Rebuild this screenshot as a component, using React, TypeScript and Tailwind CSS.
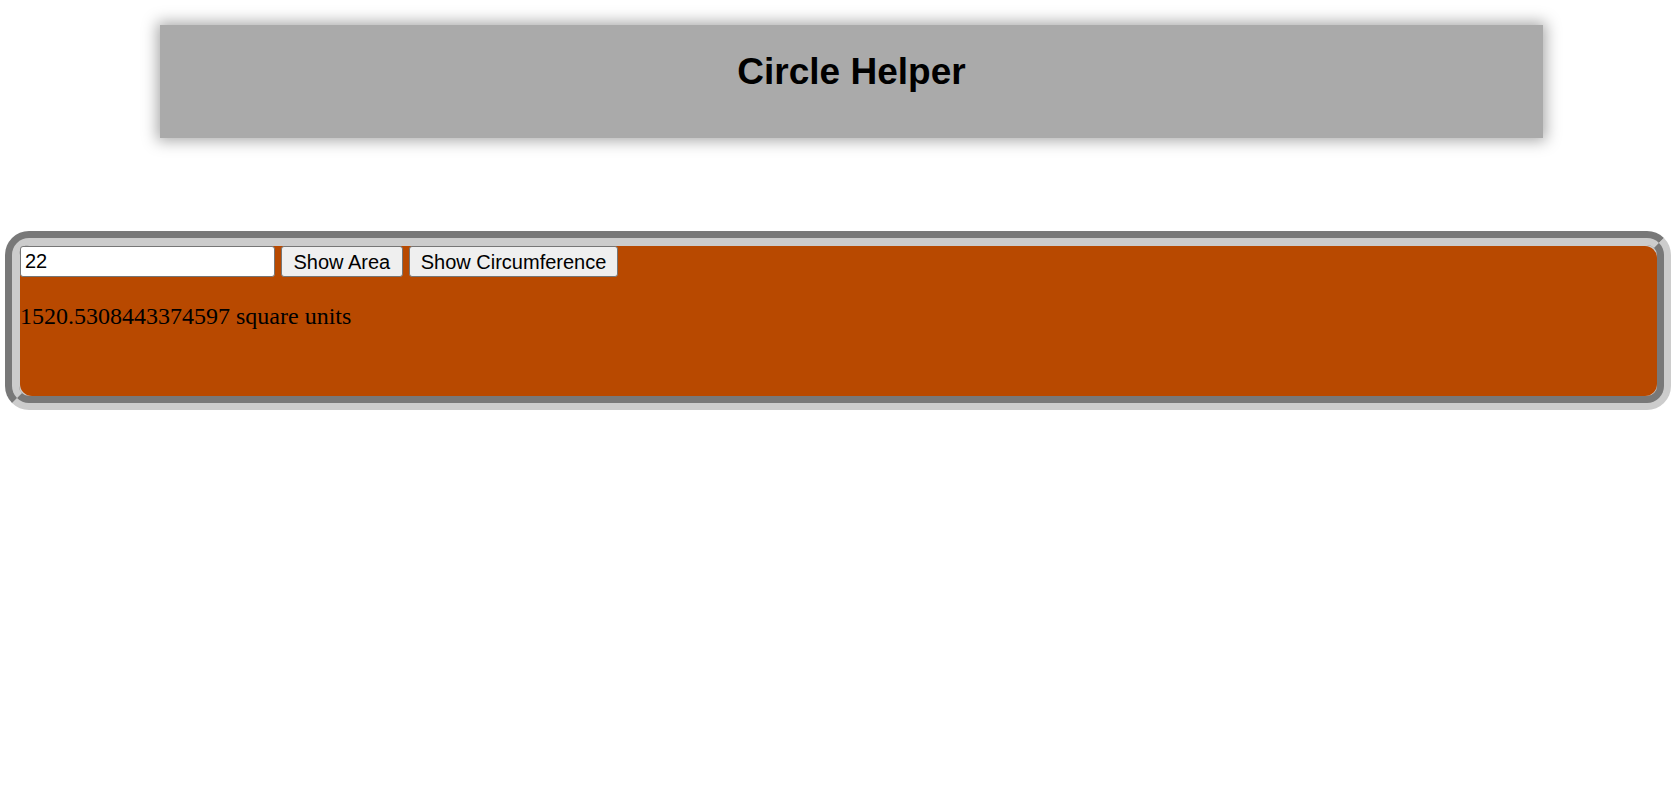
export default function App() {
  return (
    <div className="min-h-screen w-full bg-white">
      {/* header */}
      <div className="pt-[25px] pl-[160px] h-[231px]">
        <div className="w-[1383px] h-[113px] bg-[#aaaaaa] shadow-[0_0_14px_3px_#aaaaaa] pt-[26px]">
          <h1 className="text-center text-[37px] leading-[42px] font-bold text-black font-['Liberation_Sans',Arial,sans-serif]">
            Circle Helper
          </h1>
        </div>
      </div>

      {/* calculator */}
      <div className="ml-[5px] w-[1666px] border-[14px] [border-style:groove] border-[#cccccc] rounded-[24px] bg-[#cccccc]">
        <div className="ml-[1px] mt-[1px] h-[150px] bg-[#b84900] rounded-[12px]">
          <div className="flex items-start gap-[6px] font-['Liberation_Sans',Arial,sans-serif] text-[20px] text-black">
            <input
              type="text"
              defaultValue="22"
              className="w-[255px] h-[31px] bg-white border-[1.5px] border-[#767676] rounded-[3px] pl-[4px] text-[20px] leading-[24px] outline-none font-['Liberation_Sans',Arial,sans-serif]"
            />
            <button className="h-[31px] px-[11.5px] bg-[#efefef] border-[1.5px] border-[#767676] rounded-[3px] leading-[24px]">
              Show Area
            </button>
            <button className="h-[31px] px-[11px] bg-[#efefef] border-[1.5px] border-[#767676] rounded-[3px] leading-[24px]">
              Show Circumference
            </button>
          </div>
          <p className="mt-[21px] text-[24px] text-black font-['Liberation_Serif','Times_New_Roman',serif]">
            1520.5308443374597 square units
          </p>
        </div>
      </div>
    </div>
  );
}
